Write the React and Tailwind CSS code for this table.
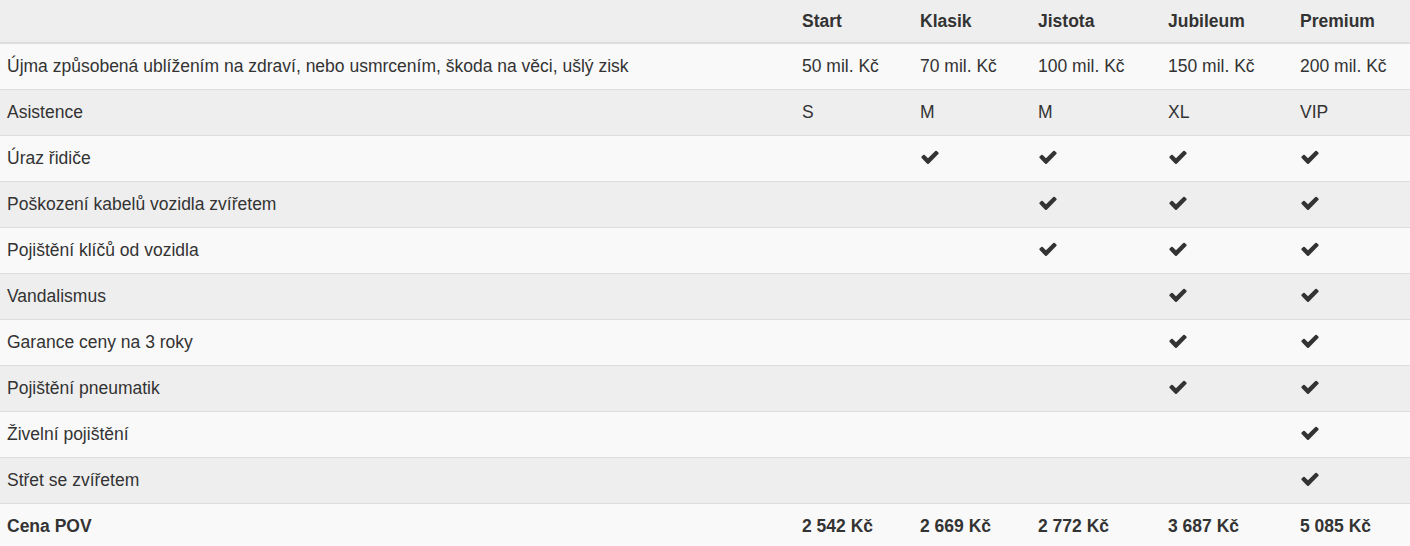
const plans = ['Start', 'Klasik', 'Jistota', 'Jubileum', 'Premium'];

const rows = [
  { label: 'Újma způsobená ublížením na zdraví, nebo usmrcením, škoda na věci, ušlý zisk', values: ['50 mil. Kč', '70 mil. Kč', '100 mil. Kč', '150 mil. Kč', '200 mil. Kč'] },
  { label: 'Asistence', values: ['S', 'M', 'M', 'XL', 'VIP'] },
  { label: 'Úraz řidiče', checks: 1 },
  { label: 'Poškození kabelů vozidla zvířetem', checks: 2 },
  { label: 'Pojištění klíčů od vozidla', checks: 2 },
  { label: 'Vandalismus', checks: 3 },
  { label: 'Garance ceny na 3 roky', checks: 3 },
  { label: 'Pojištění pneumatik', checks: 3 },
  { label: 'Živelní pojištění', checks: 4 },
  { label: 'Střet se zvířetem', checks: 4 },
];

const prices = ['2 542 Kč', '2 669 Kč', '2 772 Kč', '3 687 Kč', '5 085 Kč'];

function Check() {
  return (
    <svg width="20" height="20" viewBox="0 0 1792 1792" className="inline-block align-middle -mt-1" fill="#333">
      <path d="M1671 566q0 40-28 68l-724 724-136 136q-28 28-68 28t-68-28l-136-136-362-362q-28-28-28-68t28-68l136-136q28-28 68-28t68 28l294 295 656-657q28-28 68-28t68 28l136 136q28 28 28 68z" />
    </svg>
  );
}

export default function App() {
  return (
    <div className="w-[1410px] bg-white text-[17.5px] text-[#333]" style={{ fontFamily: '"Liberation Sans", Arial, sans-serif' }}>
      <table className="w-full table-fixed border-collapse">
        <colgroup>
          <col className="w-[795px]" />
          <col className="w-[118px]" />
          <col className="w-[118px]" />
          <col className="w-[130px]" />
          <col className="w-[132px]" />
          <col />
        </colgroup>
        <thead>
          <tr className="h-[43px] bg-[#eee] border-b-2 border-[#ddd]">
            <th className="px-[7px]" />
            {plans.map((p) => (
              <th key={p} className="px-[7px] text-left font-bold">{p}</th>
            ))}
          </tr>
        </thead>
        <tbody>
          {rows.map((r, i) => (
            <tr key={r.label} className={`h-[46px] border-t border-[#ddd] ${i % 2 === 0 ? 'bg-[#f9f9f9]' : 'bg-[#eee]'}`}>
              <td className="px-[7px] whitespace-nowrap">{r.label}</td>
              {plans.map((p, j) => (
                <td key={p} className="px-[7px] whitespace-nowrap">
                  {r.values ? r.values[j] : j >= r.checks ? <Check /> : null}
                </td>
              ))}
            </tr>
          ))}
          <tr className="h-[46px] border-t border-[#ddd] bg-[#f9f9f9] font-bold">
            <td className="px-[7px]">Cena POV</td>
            {prices.map((p) => (
              <td key={p} className="px-[7px] whitespace-nowrap">{p}</td>
            ))}
          </tr>
        </tbody>
      </table>
    </div>
  );
}
